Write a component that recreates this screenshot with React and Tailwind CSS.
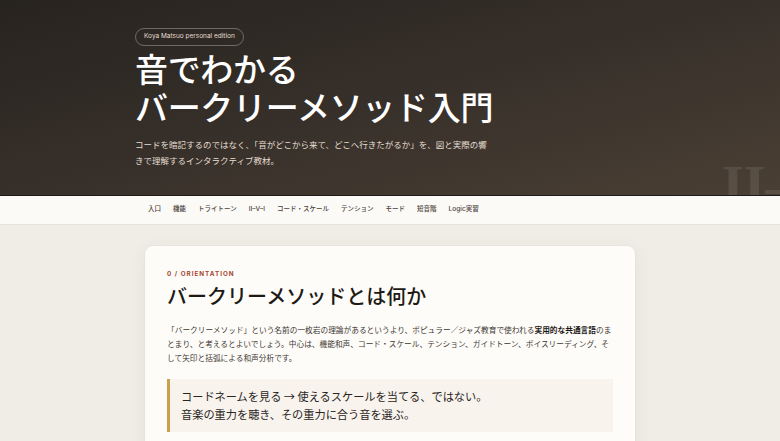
const navItems = ['入口', '機能', 'トライトーン', 'II–V–I', 'コード・スケール', 'テンション', 'モード', '短音階', 'Logic実習']

function Hero() {
  return (
    <header className="relative overflow-hidden h-[196px] bg-linear-to-br from-[#27231f] via-[#37302a] to-[#4a3f34] border-b border-[#1f1b18]">
      {/* big faded progression mark, cut off by the header edge */}
      <div className="absolute top-[158px] left-[722px] text-[56px] leading-none font-bold text-white/[0.09] whitespace-nowrap select-none font-['Liberation_Serif',serif]">
        II–V–I
      </div>
      <div className="relative max-w-[510px] mx-auto pt-[20px]">
        <span className="inline-flex items-center h-[18px] px-[8px] rounded-full border border-white/30 text-[6.5px] text-[#e6dfd4]">
          Koya Matsuo personal edition
        </span>
        <h1 className="mt-[6px] text-[33px] leading-[38px] font-medium text-white tracking-[-0.01em] font-['Liberation_Serif','Noto_Sans_CJK_JP',serif]">
          音でわかる
          <br />
          バークリーメソッド入門
        </h1>
        <p className="mt-[9px] w-[356px] text-[8.5px] leading-[16.5px] text-[#e4ddd2]">
          コードを暗記するのではなく、「音がどこから来て、どこへ行きたがるか」を、図と実際の響きで理解するインタラクティブ教材。
        </p>
      </div>
    </header>
  )
}

function Nav() {
  return (
    <nav className="h-[29px] bg-[#fcfaf6] border-b border-[#e7e2d9]">
      <div className="max-w-[510px] mx-auto h-full flex items-center gap-[12px] pl-[13px] text-[6.5px] font-medium text-[#4a433b]">
        {navItems.map((item) => (
          <span key={item}>{item}</span>
        ))}
      </div>
    </nav>
  )
}

export default function App() {
  return (
    <div className="min-h-screen bg-[#f0ede7] font-['Inter','Noto_Sans_CJK_JP',sans-serif]">
      <Hero />
      <Nav />
      <main className="pt-[20px]">
        <section className="w-[492px] mx-auto bg-[#fdfcf9] rounded-[9px] border border-[#e9e4db] shadow-[0_4px_18px_rgba(60,45,30,0.06)] px-[22px] pt-[24px] pb-[30px]">
          <div className="text-[6.3px] leading-[9px] font-bold tracking-[0.16em] text-[#a5472f]">
            0 / ORIENTATION
          </div>
          <h2 className="mt-[5px] text-[20px] leading-[26px] font-medium text-[#1d1915] font-['Liberation_Serif','Noto_Sans_CJK_JP',serif]">
            バークリーメソッドとは何か
          </h2>
          <p className="mt-[14px] text-[7.7px] leading-[14px] text-[#3d3731]">
            「バークリーメソッド」という名前の一枚岩の理論があるというより、ポピュラー／ジャズ教育で使われる
            <strong className="font-bold text-[#1d1915]">実用的な共通言語</strong>
            のまとまり、と考えるとよいでしょう。中心は、機能和声、コード・スケール、テンション、ガイドトーン、ボイスリーディング、そして矢印と括弧による和声分析です。
          </p>
          <blockquote className="mt-[13px] border-l-[3px] border-[#c9a04e] bg-[#f8f3ec] pl-[11px] pt-[8px] pb-[9px] text-[11.2px] leading-[18px] text-[#2a251f] font-['Noto_Sans_CJK_JP',serif]">
            コードネームを見る → 使えるスケールを当てる、ではない。
            <br />
            音楽の重力を聴き、その重力に合う音を選ぶ。
          </blockquote>
        </section>
      </main>
    </div>
  )
}
